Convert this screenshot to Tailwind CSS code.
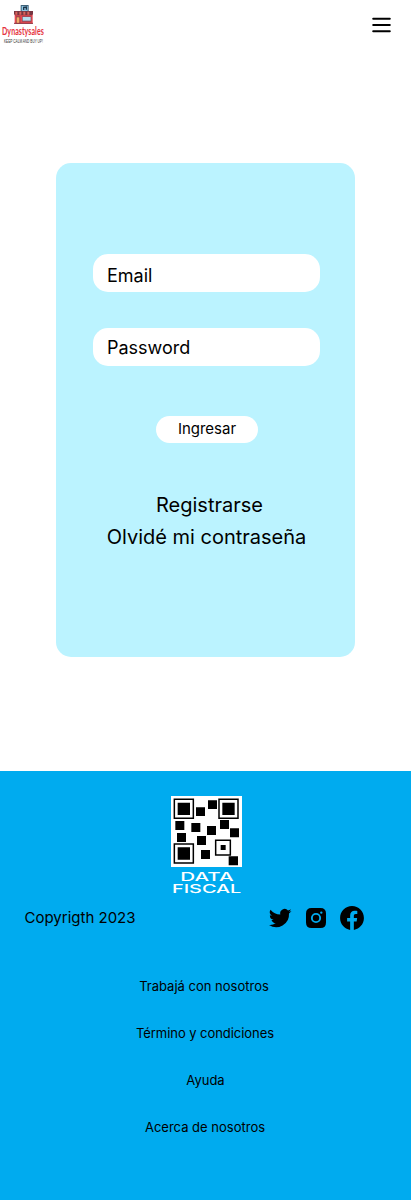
<!DOCTYPE html>
<html lang="es">
<head>
<meta charset="utf-8">
<meta name="viewport" content="width=device-width, initial-scale=1">
<title>Dynastysales</title>
<script src="https://cdn.jsdelivr.net/npm/@tailwindcss/browser@4"></script>
</head>
<body class="flex min-h-[1200px] flex-col bg-white font-['Inter',sans-serif] text-black">
<header class="flex h-[50px] items-center justify-between pr-[20px]">
  <svg class="h-[50px] w-[50px] overflow-visible" viewBox="0 0 150 150" aria-label="Dynastysales">
    <rect x="62" y="15" width="24" height="20" rx="1" fill="#3e6178"/>
    <path d="M65 18h18v15H65z" fill="#8fc7e4"/>
    <path d="M71 30V22l8-1v8" fill="none" stroke="#1d3548" stroke-width="4"/>
    <rect x="44" y="42" width="54" height="29" fill="#e8474f"/>
    <path d="M42 33h57v9l-3 4H45l-3-4z" fill="#773542"/>
    <path d="M46 35h6v9h-6zm12 0h6v9h-6zm12 0h6v9h-6zm12 0h6v9h-6z" fill="#d9635a"/>
    <rect x="48" y="49" width="13" height="21" fill="#93404a"/><rect x="50" y="52" width="8" height="17" fill="#f4ae68"/>
    <rect x="66" y="49" width="28" height="16" fill="#7f4d5d"/><path d="M68 51h24v11H68z" fill="#b4dfef"/>
    <path d="M42 70h57" stroke="#8a3543" stroke-width="3"/>
    <text transform="translate(6 104) scale(.66 1)" textLength="190" lengthAdjust="spacing" font-family="Lato, sans-serif" font-weight="700" font-size="32" fill="#e5323d">Dynastysales</text>
    <text transform="translate(12 128) scale(.62 1)" textLength="188" lengthAdjust="spacingAndGlyphs" font-family="Liberation Sans, sans-serif" font-size="15" fill="#333">KEEP CALM AND BUY UP!</text>
  </svg>
  <button aria-label="Menú"><svg class="h-[20px] w-[19px]" viewBox="0 0 19 20" fill="none" stroke="#000" stroke-width="2" stroke-linecap="round"><path d="M1.2 3.7h16.6M1.2 10h16.6M1.2 16.2h16.6"/></svg></button>
</header>
<main class="h-[721px] pt-[113px]">
  <section class="ml-[56px] flex h-[494px] w-[299px] flex-col items-center rounded-[15px] bg-[#bbf3ff] pt-[91px]">
    <div class="ml-[2px] flex h-[38px] w-[227px] items-center rounded-[15px] bg-white pt-[5px] pl-[14px] text-[18px]">Email</div>
    <div class="mt-[36px] ml-[2px] flex h-[38px] w-[227px] items-center rounded-[15px] bg-white pt-[1px] pl-[14px] text-[18px]">Password</div>
    <button class="mt-[50px] ml-[3px] h-[27px] w-[102px] rounded-[15px] bg-white pb-[1px] text-[15px] leading-[26px]">Ingresar</button>
    <a class="mt-[46px] ml-[8px] text-[20px] leading-[32px]">Registrarse</a>
    <a class="ml-[2px] text-[20px] leading-[32px]">Olvidé mi contraseña</a>
  </section>
</main>
<footer class="h-[429px] bg-[#00abef] pt-[25px]">
  <svg class="ml-[171px] h-[98px] w-[71px] overflow-visible" viewBox="33 24 213 294" aria-label="Data Fiscal">
    <path fill="#fff" d="M33 24h213v213H33z"/>
    <g fill="none" stroke="#000" stroke-width="4.5"><path d="M43 34h57v57H43zM177 34h57v57h-57zM43 168h57v57H43z"/><path d="M167 157h44v44h-44z"/></g>
    <path d="M53 44h37v37H53zm134 0h37v37h-37zM53 178h37v37H53zM182 171h15v15h-15zM144 37h27v26h-27zm-36 21h27v26h-27zM46 99h27v27H46zm48 6h27v27H94zm47 9h27v27h-27zm39-18h27v27h-27zm30 25h27v27h-27zM51 135h27v27H51zm60 9h27v27h-27zm12 42h27v27h-27zm83 19h28v27h-28z"/>
    <g font-family="Inter, sans-serif" font-size="35" font-weight="500" fill="#fff"><text x="61" y="278" textLength="160" lengthAdjust="spacingAndGlyphs">DATA</text><text x="36" y="316" textLength="208" lengthAdjust="spacingAndGlyphs">FISCAL</text></g>
  </svg>
  <div class="mt-[11px] flex h-[26px] items-center justify-between pr-[46px] pl-[24.5px]">
    <span class="text-[15px]">Copyrigth 2023</span>
    <div class="flex items-center">
      <svg class="mr-[14px] h-[24px] w-[24px]" viewBox="0 0 24 24"><path d="M23.5 5.1a9 9 0 0 1-2.6.7 4.5 4.5 0 0 0 2-2.5 9 9 0 0 1-2.9 1.1 4.5 4.5 0 0 0-7.7 4.1A12.8 12.8 0 0 1 2.5 3.8a4.5 4.5 0 0 0 1.4 6 4.5 4.5 0 0 1-2-.5v.1a4.5 4.5 0 0 0 3.6 4.4 4.5 4.5 0 0 1-2 .1 4.5 4.5 0 0 0 4.2 3.1A9 9 0 0 1 1 18.9a12.8 12.8 0 0 0 20-11.4A9 9 0 0 0 23.5 5.1z"/></svg>
      <svg class="mr-[13px] h-[20px] w-[20px]" viewBox="0 0 20 20"><path fill-rule="evenodd" d="M5.5 0h9Q20 0 20 5.5v9Q20 20 14.5 20h-9Q0 20 0 14.5v-9Q0 0 5.5 0zM10 4.9a5.1 5.1 0 1 0 0 10.2 5.1 5.1 0 0 0 0-10.2zm0 1.9a3.2 3.2 0 1 1 0 6.4 3.2 3.2 0 0 1 0-6.4zm5.3-3.4a1.2 1.2 0 1 0 0 2.4 1.2 1.2 0 0 0 0-2.4z"/></svg>
      <svg class="h-[26px] w-[26px]" viewBox="0 0 24 24"><path d="M23 12.07C23 5.96 18.07 1 12 1S1 5.96 1 12.07c0 5.52 4.02 10.1 9.28 10.93v-7.73H7.49v-3.2h2.79V9.64c0-2.77 1.64-4.3 4.15-4.3 1.2 0 2.46.22 2.46.22v2.72H15.5c-1.37 0-1.8.86-1.8 1.73v2.07h3.06l-.49 3.2H13.7V23C18.98 22.17 23 17.59 23 12.07z"/></svg>
    </div>
  </div>
  <nav class="mt-[45px] flex flex-col items-center gap-[27px] text-[13px] leading-[20px]">
    <a class="ml-[-3px]">Trabajá con nosotros</a><a class="ml-[-1px] tracking-[-0.05px]">Término y condiciones</a><a>Ayuda</a><a class="ml-[-1px]">Acerca de nosotros</a>
  </nav>
</footer>
</body>
</html>
